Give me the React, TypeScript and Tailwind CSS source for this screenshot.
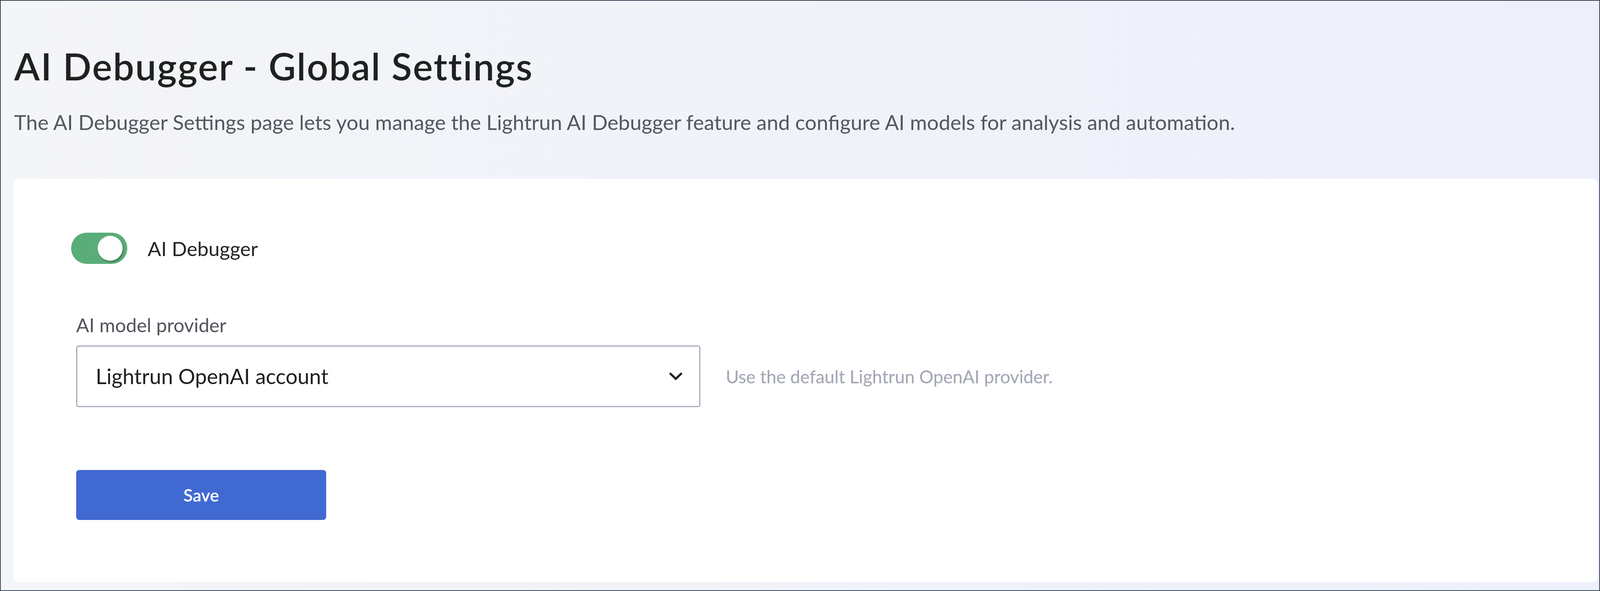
const font = { fontFamily: "Lato, 'Noto Sans', sans-serif" };

function Toggle() {
  return (
    <div className="relative w-[144px] h-[80px] rounded-full bg-[#5aad79] -ml-[13px] shrink-0">
      <div className="absolute left-[68px] top-[8px] w-[64px] h-[64px] rounded-full bg-white shadow-[2px_3px_4px_rgba(0,0,0,0.35)]" />
    </div>
  );
}

function Chevron() {
  return (
    <svg width="34" height="20" viewBox="0 0 34 20" fill="none" className="shrink-0">
      <path d="M3.5 3.5 L17 16.5 L30.5 3.5" stroke="#1d1f22" strokeWidth="5.5" strokeLinecap="round" />
    </svg>
  );
}

export default function App() {
  return (
    <div
      className="w-full h-screen border-2 border-[#3b4858] bg-gradient-to-r from-[#f4f5f8] to-[#edf0fb] flex flex-col"
      style={font}
    >
      <div className="pl-[34px] pt-[120px]">
        <h1 className="text-[96px] leading-[94px] font-semibold tracking-[2.5px] text-[#1f2221]">
          AI Debugger - Global Settings
        </h1>
        <p className="mt-[71px] text-[53px] leading-[52px] text-[#545760]">
          The AI Debugger Settings page lets you manage the Lightrun AI Debugger feature and configure AI models for analysis and automation.
        </p>
      </div>

      <div className="mt-[119px] ml-[32px] mr-[4px] bg-white rounded-[12px] pl-[161px] pt-[138px] pb-[159px]">
        <div className="flex items-center gap-[52px]">
          <Toggle />
          <span className="text-[51px] leading-[49px] text-[#222426]">AI Debugger</span>
        </div>

        <div className="mt-[132px] text-[49px] leading-[49px] text-[#50535c]">AI model provider</div>

        <div className="mt-[28px] flex items-center gap-[65px]">
          <div className="w-[1598px] h-[158px] border-[3px] border-[#a9acbc] rounded-[6px] flex items-center justify-between pl-[47px] pr-[43px]">
            <span className="text-[54px] leading-[52px] text-[#1d1f22]">Lightrun OpenAI account</span>
            <Chevron />
          </div>
          <span className="text-[45.5px] leading-[45px] text-[#a2a5b3]">Use the default Lightrun OpenAI provider.</span>
        </div>

        <button className="mt-[161px] w-[640px] h-[128px] rounded-[8px] bg-[#4169d2] text-white text-[44px] font-semibold flex items-center justify-center">
          Save
        </button>
      </div>
    </div>
  );
}
